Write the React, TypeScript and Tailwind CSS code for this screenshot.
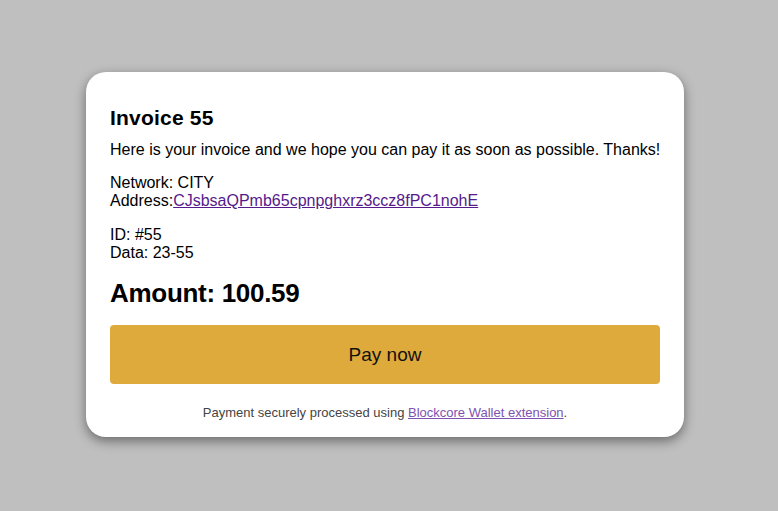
export default function App() {
  return (
    <div className="min-h-screen w-full bg-[#bfbfbf] flex items-center justify-center pr-[8px] pb-[2px]" style={{ fontFamily: '"Liberation Sans", Arial, sans-serif' }}>
      <div className="w-[598px] bg-white rounded-[20px] shadow-[0_4px_12px_rgba(0,0,0,0.45)] px-6 pt-[34px] pb-[16.5px] text-black">
        <h1 className="text-[21px] font-bold leading-[23px] tracking-[0.2px]">Invoice 55</h1>
        <p className="text-[16px] leading-[18px] mt-[12px] whitespace-nowrap">Here is your invoice and we hope you can pay it as soon as possible. Thanks!</p>
        <p className="text-[16px] leading-[18px] mt-[15px]">
          Network: CITY
          <br />
          Address:<a href="#" className="text-[#551a8b] underline">CJsbsaQPmb65cpnpghxrz3ccz8fPC1nohE</a>
        </p>
        <p className="text-[16px] leading-[18px] mt-[16px]">
          ID: #55
          <br />
          Data: 23-55
        </p>
        <h2 className="text-[26px] font-bold leading-[30px] tracking-[-0.3px] mt-[16px]">Amount: 100.59</h2>
        <button className="mt-[17px] w-full h-[59px] rounded-[4px] bg-[#dfaa3c] text-[19px] leading-[22px] text-[#111] flex items-center justify-center">Pay now</button>
        <p className="text-[13px] leading-[15px] text-[#444] text-center mt-[21px]">
          Payment securely processed using <a href="#" className="text-[#7d52b0] underline">Blockcore Wallet extension</a>.
        </p>
      </div>
    </div>
  );
}
